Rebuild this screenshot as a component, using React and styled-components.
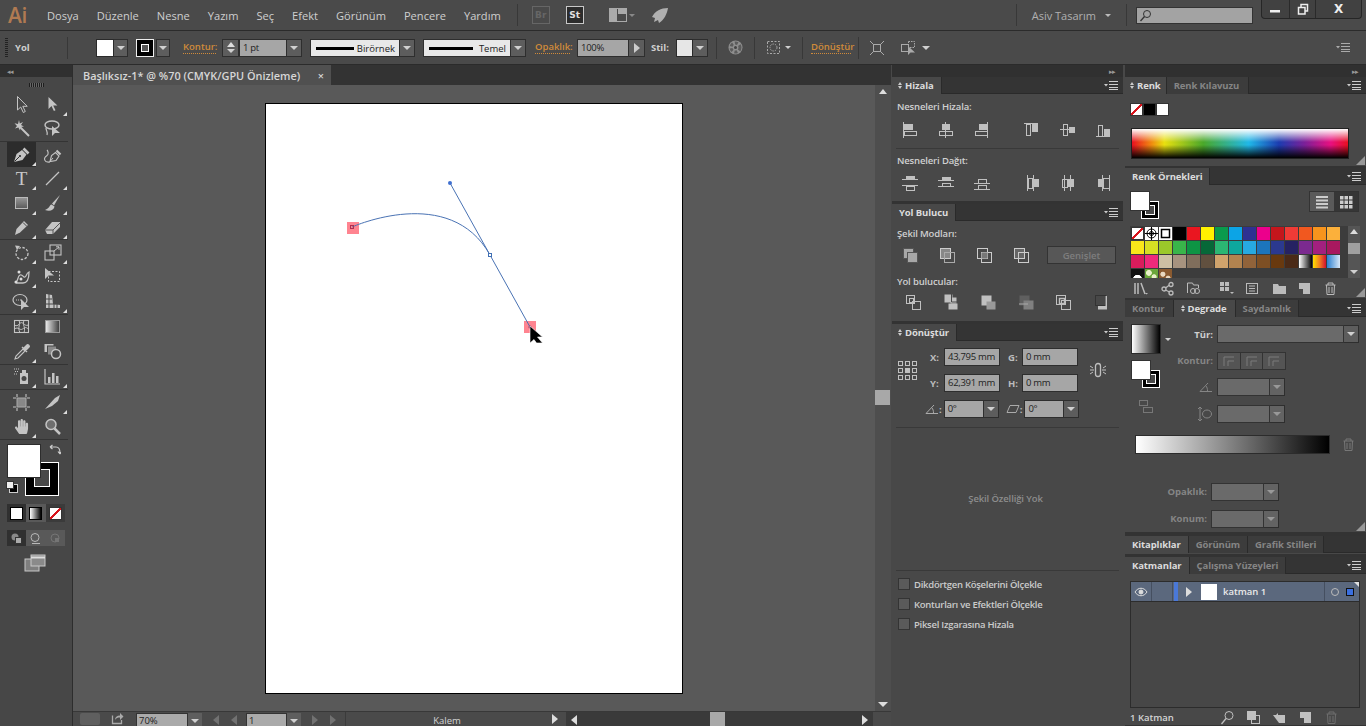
import React from 'react';
import styled, { createGlobalStyle } from 'styled-components';
import { FaHandPaper } from 'react-icons/fa';

const GlobalStyle = createGlobalStyle`
  html, body { margin: 0; padding: 0; background: #484848; overflow: hidden; }
  * { box-sizing: border-box; }
  body { font-family: "Open Sans", "Noto Sans", sans-serif; }
`;

const Shell = styled.div`
  width: 1366px;
  height: 726px;
  display: flex;
  flex-direction: column;
  overflow: hidden;
  background: #484848;
  color: #c8c8c8;
`;

/* top menu */
const MenuBar = styled.div`
  height: 31px;
  flex: none;
  display: flex;
  align-items: center;
  background: #4a4a4a;
  border-bottom: 1px solid #2b2b2b;
  position: relative;
`;
const Logo = styled.div`
  width: 47px;
  padding-left: 8px;
  font-family: "Open Sans", sans-serif;
  font-size: 21px;
  font-weight: 600;
  color: #b07a52;
  letter-spacing: -0.5px;
`;
const MenuItem = styled.span`
  font-size: 11.1px;
  color: #cfcfcf;
  margin-right: 18px;
`;
const VLine = styled.div`
  width: 1px;
  height: ${p => p.$h || 22}px;
  background: #383838;
  margin-left: ${p => p.$ml || 0}px;
  flex: none;
`;
const BridgeBox = styled.div`
  width: 18px;
  height: 18px;
  margin-left: ${p => p.$ml}px;
  border: 1px solid ${p => (p.$on ? '#c8c8c8' : '#666')};
  background: ${p => (p.$on ? '#2c2c2c' : 'transparent')};
  color: ${p => (p.$on ? '#e0e0e0' : '#666')};
  font: bold 9px "DejaVu Sans", sans-serif;
  display: flex;
  align-items: center;
  justify-content: center;
`;
const Slot = styled.div`
  margin-left: ${p => p.$ml || 0}px;
  margin-top: ${p => p.$mt || 0}px;
  width: ${p => p.$w || 'auto'}${p => (p.$w ? 'px' : '')};
  flex: none;
  display: flex;
  align-items: center;
  justify-content: center;
  color: #aaa;
`;
const Workspace = styled.span`
  margin-left: 15px;
  font-size: 11px;
  width: 66px;
  color: #b0b0b0;
  white-space: nowrap;
`;
const Caret = styled.i`
  display: block;
  flex: none;
  width: 0;
  height: 0;
  margin-left: ${p => p.$ml || 0}px;
  border-left: ${p => p.$s || 3}px solid transparent;
  border-right: ${p => p.$s || 3}px solid transparent;
  border-top: ${p => p.$s || 3}px solid ${p => p.$c || '#d0d0d0'};
`;
const SearchBox = styled.div`
  width: 117px;
  height: 17px;
  margin-left: 9px;
  background: #a3a3a3;
  border: 1px solid #333;
  display: flex;
  align-items: center;
  padding-left: 2px;
  color: #333;
`;
const WindowButtons = styled.div`
  position: absolute;
  top: 0;
  right: 4px;
  width: 101px;
  height: 19px;
  display: flex;
  background: #414141;
  border: 1px solid #262626;
  border-top: 0;
  border-radius: 0 0 4px 4px;
`;
const WinBtn = styled.div`
  width: ${p => p.$w}px;
  border-left: ${p => (p.$first ? 0 : '1px solid #2a2a2a')};
  display: flex;
  align-items: center;
  justify-content: center;
  color: #eee;
  font: bold 12px "DejaVu Sans", sans-serif;
`;

/* control bar */
const ControlBar = styled.div`
  height: 34px;
  flex: none;
  display: flex;
  align-items: center;
  background: #4a4a4a;
  border-bottom: 1px solid #2b2b2b;
  padding-right: 16px;
`;
const Grip = styled.div`
  width: 3px;
  height: 20px;
  margin-left: 5px;
  flex: none;
  background: repeating-linear-gradient(to bottom, #222 0 1px, transparent 1px 2px);
`;
const CtlLabel = styled.span`
  flex: none;
  width: ${p => p.$w}px;
  margin-left: ${p => p.$ml || 0}px;
  font-size: 9.5px;
  font-weight: 700;
  color: #cfcfcf;
  white-space: nowrap;
`;
const LinkLabel = styled(CtlLabel)`
  color: #d08a3a;
  font-weight: 600;
  border-bottom: 1px dotted #d08a3a;
  line-height: 12px;
`;
const Swatch = styled.div`
  flex: none;
  width: ${p => p.$w || 18}px;
  height: 18px;
  margin-left: ${p => p.$ml || 0}px;
  background: ${p => p.$bg || '#fff'};
  border: 1px solid #2a2a2a;
`;
const StrokeSwatch = styled(Swatch)`
  background: #000;
  border: 1px solid #eee;
  display: flex;
  align-items: center;
  justify-content: center;
  &::after {
    content: '';
    width: 6px;
    height: 6px;
    border: 1px solid #fff;
    background: #555;
  }
`;
const DropBtn = styled.div`
  flex: none;
  width: ${p => p.$w || 15}px;
  height: ${p => p.$h || 18}px;
  margin-left: ${p => p.$ml || 0}px;
  background: ${p => (p.$dim ? '#636363' : '#5d5d5d')};
  border: 1px solid #2e2e2e;
  border-left-width: ${p => (p.$joined ? 0 : 1)}px;
  display: flex;
  align-items: center;
  justify-content: center;
`;
const Spinner = styled.div`
  flex: none;
  width: 17px;
  height: 18px;
  margin-left: 6px;
  background: #5d5d5d;
  border: 1px solid #2e2e2e;
  display: flex;
  flex-direction: column;
  align-items: center;
  justify-content: space-around;
  padding: 2px 0;
`;
const UpTri = styled.i`
  display: block;
  width: 0;
  height: 0;
  border-left: 4px solid transparent;
  border-right: 4px solid transparent;
  border-bottom: 5px solid #ddd;
`;
const ValueBox = styled.div`
  flex: none;
  width: ${p => p.$w}px;
  height: ${p => p.$h || 18}px;
  margin-left: ${p => p.$ml || 0}px;
  background: #a6a6a6;
  border: 1px solid #2e2e2e;
  color: #1e1e1e;
  font-size: 9.5px;
  letter-spacing: -0.3px;
  line-height: ${p => (p.$h || 18) - 2}px;
  padding-left: 3px;
  white-space: nowrap;
  overflow: hidden;
`;
const StrokePick = styled.div`
  flex: none;
  width: ${p => p.$w}px;
  height: 18px;
  margin-left: ${p => p.$ml}px;
  background: #e8e8e8;
  border: 1px solid #2e2e2e;
  color: #222;
  font-size: 9.5px;
  padding: 1px 4px 0 5px;
  display: flex;
  align-items: center;
  justify-content: space-between;
  &::before {
    content: '';
    width: ${p => p.$line}px;
    height: 3px;
    background: #000;
  }
`;
const RightSlot = styled(Slot)`
  margin-left: auto;
`;

/* main area */
const Main = styled.div`
  flex: 1;
  display: flex;
  min-height: 0;
`;
const ToolColumn = styled.div`
  width: 73px;
  flex: none;
  background: #474747;
  border-right: 1px solid #2d2d2d;
  display: flex;
  flex-direction: column;
`;
const Strip = styled.div`
  height: 12px;
  flex: none;
  background: #303030;
  display: flex;
  align-items: center;
  justify-content: ${p => (p.$left ? 'flex-start' : 'flex-end')};
  padding: 0 8px 0 7px;
  color: #999;
  font-size: 7px;
  letter-spacing: -1px;
  line-height: 1;
`;
const ToolGrip = styled.div`
  height: 15px;
  flex: none;
  display: flex;
  justify-content: center;
  align-items: center;
  &::after {
    content: '';
    width: 15px;
    height: 4px;
    background: repeating-linear-gradient(to right, #1e1e1e 0 1px, #666 1px 2px);
  }
`;
const ToolGroup = styled.div`
  display: grid;
  grid-template-columns: 29px 29px;
  grid-auto-rows: 24.5px;
  column-gap: 2px;
  padding: 0 0 0 7px;
  margin: 0 4px 0 0;
  position: relative;
  border-bottom: 1px solid #343434;
  height: ${p => p.$rows * 24.5 + (p.$tight ? 0 : 1)}px;
`;
const ToolCell = styled.div`
  position: relative;
  display: flex;
  align-items: center;
  justify-content: center;
  color: #c4c4c4;
  background: ${p => (p.$on ? '#2c2c2c' : 'transparent')};
  &::after {
    content: '';
    display: ${p => (p.$more ? 'block' : 'none')};
    position: absolute;
    right: 0;
    bottom: 1px;
    width: 0;
    height: 0;
    border-left: 4px solid transparent;
    border-bottom: 4px solid #ddd;
  }
`;
const SerifT = styled.span`
  font: 19px "Liberation Serif", serif;
  color: #c8c8c8;
`;
const ColorBlock = styled.div`
  position: relative;
  height: 64px;
  flex: none;
`;
const BigFill = styled.div`
  position: absolute;
  left: 7px;
  top: 4px;
  width: 34px;
  height: 34px;
  background: #fff;
  border: 1px solid #2d2d2d;
  z-index: 2;
`;
const BigStroke = styled.div`
  position: absolute;
  left: 25px;
  top: 22px;
  width: 34px;
  height: 34px;
  background: #000;
  border: 1px solid #fff;
  display: flex;
  align-items: flex-end;
  justify-content: flex-end;
  padding: 8px;
  &::after {
    content: '';
    width: 100%;
    height: 100%;
    border: 1px solid #fff;
    background: #484848;
  }
`;
const OverIcon = styled.div`
  position: absolute;
  left: ${p => p.$x}px;
  top: ${p => p.$y}px;
  color: #ccc;
  display: flex;
`;
const ModeRow = styled.div`
  margin: ${p => p.$mt}px 0 0 7px;
  width: 58px;
  height: ${p => p.$h}px;
  flex: none;
  display: flex;
  background: #3b3b3b;
`;
const ModeCell = styled.div`
  flex: 1;
  display: flex;
  align-items: center;
  justify-content: center;
  background: ${p => (p.$on ? '#303030' : p.$lite ? '#595959' : 'transparent')};
  color: ${p => (p.$dim ? '#757575' : '#b8b8b8')};
`;
const ModeSwatch = styled.div`
  width: 13px;
  height: 13px;
  border: 1px solid #000;
  background: ${p => p.$bg};
`;
const ScreenBtn = styled.div`
  margin: 8px 0 0 24px;
  color: #bbb;
  display: flex;
`;

/* document */
const DocColumn = styled.div`
  width: 818px;
  flex: none;
  display: flex;
  flex-direction: column;
`;
const TabBar = styled.div`
  height: 20px;
  flex: none;
  background: #333;
`;
const DocTab = styled.div`
  width: 258px;
  height: 20px;
  background: #505050;
  display: flex;
  align-items: center;
  justify-content: space-between;
  padding: 0 7px 0 10px;
  font-size: 10.9px;
  font-weight: 600;
  color: #d6d6d6;
  white-space: nowrap;
`;
const DocBody = styled.div`
  flex: 1;
  display: flex;
  min-height: 0;
`;
const Canvas = styled.div`
  flex: 1;
  background: #595959;
  padding: 18px 0 0 192px;
`;
const Artboard = styled.div`
  position: relative;
  width: 418px;
  height: 591px;
  background: #fff;
  border: 1px solid #000;
`;
const PathOverlay = styled.svg`
  position: absolute;
  left: -1px;
  top: -1px;
`;
const VScroll = styled.div`
  width: 16px;
  flex: none;
  background: #4e4e4e;
  display: flex;
  flex-direction: column;
  align-items: center;
  justify-content: space-between;
  padding: 4px 0;
  position: relative;
`;
const ScrollThumb = styled.div`
  position: absolute;
  left: 0;
  top: 305px;
  width: 15px;
  height: 15px;
  background: #a8a8a8;
`;
const StatusBar = styled.div`
  height: 15px;
  flex: none;
  background: #4a4a4a;
  border-top: 1px solid #383838;
  display: flex;
  align-items: flex-start;
  font-size: 9.5px;
  overflow: hidden;
`;
const DimBox = styled.div`
  margin: 1px 0 0 7px;
  width: 20px;
  height: 12px;
  background: #5f5f5f;
  border-radius: 2px;
  flex: none;
`;
const StatusValue = styled.div`
  flex: none;
  width: ${p => p.$w}px;
  height: 16px;
  margin: 1px 0 0 ${p => p.$ml}px;
  background: #aaa;
  color: #222;
  padding-left: 2px;
  line-height: 14px;
  border: 1px solid #333;
`;
const StatusDrop = styled.div`
  flex: none;
  width: 14px;
  height: 16px;
  margin-top: 1px;
  background: #5e5e5e;
  display: flex;
  align-items: center;
  justify-content: center;
`;
const NavArrows = styled.div`
  flex: none;
  margin: 3px 0 0 ${p => p.$ml}px;
  width: ${p => p.$w}px;
  display: flex;
  justify-content: space-between;
  color: #717171;
`;
const StatusName = styled.div`
  flex: none;
  margin-left: 9px;
  width: 207px;
  padding-right: 4px;
  border-left: 1px solid #3b3b3b;
  text-align: center;
  color: #d4d4d4;
  line-height: 17px;
  height: 15px;
`;
const HScroll = styled.div`
  flex: none;
  margin-left: 8px;
  width: 307px;
  height: 15px;
  background: #3a3a3a;
  position: relative;
  display: flex;
  align-items: center;
  justify-content: space-between;
  padding: 0 5px;
`;
const HThumb = styled.div`
  position: absolute;
  left: 144px;
  top: 0;
  width: 15px;
  height: 15px;
  background: #a8a8a8;
`;
const SideTri = styled.i`
  display: block;
  flex: none;
  width: 0;
  height: 0;
  border-top: 5px solid transparent;
  border-bottom: 5px solid transparent;
  ${p => (p.$left ? `border-right: 6px solid ${p.$c || '#ddd'};` : `border-left: 6px solid ${p.$c || '#ddd'};`)}
  margin-left: ${p => p.$ml || 0}px;
  align-self: center;
`;
const NameArrow = styled(SideTri)`
  margin-top: 2px;
  align-self: flex-start;
`;

/* panels */
const PanelColumn = styled.div`
  flex: none;
  width: ${p => p.$w}px;
  margin-left: ${p => p.$ml}px;
  display: flex;
  flex-direction: column;
  background: #333;
`;
const Panel = styled.div`
  flex: none;
  height: ${p => p.$h}px;
  margin-top: ${p => p.$mt || 0}px;
  background: #484848;
  display: flex;
  flex-direction: column;
  position: relative;
`;
const FillRest = styled.div`
  flex: 1;
  background: #484848;
`;
const PanelHead = styled.div`
  height: 17px;
  flex: none;
  background: #343434;
  display: flex;
  align-items: stretch;
  border-bottom: 1px solid #2a2a2a;
  position: relative;
`;
const Tab = styled.div`
  display: flex;
  align-items: center;
  padding: 0 ${p => p.$pr || p.$px || 6}px 0 ${p => p.$px || 6}px;
  font-size: 9.5px;
  font-weight: 700;
  letter-spacing: -0.1px;
  white-space: nowrap;
  color: ${p => (p.$on ? '#dcdcdc' : '#858585')};
  background: ${p => (p.$on ? '#484848' : '#3c3c3c')};
  border-right: 1px solid #2a2a2a;
  height: 17px;
`;
const Updown = styled.span`
  font-size: 7px;
  margin-right: 3px;
  line-height: 1;
  display: flex;
  flex-direction: column;
  gap: 1px;
  &::before, &::after {
    content: '';
    width: 0;
    height: 0;
    border-left: 2.5px solid transparent;
    border-right: 2.5px solid transparent;
  }
  &::before { border-bottom: 3px solid #ccc; }
  &::after { border-top: 3px solid #ccc; }
`;
const PanelMenu = styled.div`
  margin-left: auto;
  align-self: center;
  margin-right: 5px;
  color: #ccc;
  display: flex;
`;
const Label = styled.div`
  height: 12px;
  line-height: 14px;
  margin-top: ${p => p.$mt || 0}px;
  padding-left: 5px;
  font-size: 9.5px;
  font-weight: 600;
  letter-spacing: -0.15px;
  color: #d0d0d0;
`;
const PanelRule = styled.div`
  height: 1px;
  flex: none;
  background: #393939;
  margin: ${p => p.$mt || 0}px 4px 0 4px;
`;
const IconRow = styled.div`
  display: flex;
  height: 20px;
  margin-top: ${p => p.$mt || 0}px;
  padding-left: ${p => p.$pl || 0}px;
  align-items: center;
`;
const IconCell = styled.div`
  flex: none;
  width: ${p => p.$w}px;
  margin-left: ${p => p.$ml || 0}px;
  display: flex;
  justify-content: center;
  color: #c0c0c0;
`;
const WideBtn = styled.div`
  margin-left: 7px;
  width: 69px;
  height: 18px;
  background: #575757;
  border: 1px solid #333;
  color: #7e7e7e;
  font-size: 9.5px;
  font-weight: 600;
  text-align: center;
  line-height: 18px;
`;
const TransformGrid = styled.div`
  display: grid;
  grid-template-columns: 33px 14px 56px 22px 56px 1fr;
  grid-template-rows: 18px 18px;
  row-gap: 8px;
  align-items: center;
  margin-top: 7px;
  padding-left: 5px;
`;
const RefPoint = styled.div`
  grid-row: 1 / 3;
  color: #c0c0c0;
  display: flex;
`;
const LinkSlot = styled.div`
  grid-row: 1 / 3;
  grid-column: 6;
  color: #c0c0c0;
  display: flex;
  justify-content: center;
  padding-right: 5px;
`;
const FieldLabel = styled.span`
  font-size: 9.5px;
  font-weight: 700;
  color: #bcbcbc;
  padding-left: ${p => p.$pl || 0}px;
`;
const AngleRow = styled.div`
  display: flex;
  align-items: center;
  margin-top: 8px;
  height: 18px;
`;
const EmptyNote = styled.div`
  height: 142px;
  display: flex;
  align-items: center;
  justify-content: center;
  font-size: 9.5px;
  font-weight: 600;
  letter-spacing: -0.12px;
  color: #8d8d8d;
  flex: none;
  padding: 0 4px 2px 0;
`;
const CheckList = styled.div`
  padding-top: 3px;
`;
const CheckRow = styled.div`
  height: 20px;
  display: flex;
  align-items: center;
  padding-left: 6px;
  font-size: 9.5px;
  font-weight: 600;
  letter-spacing: -0.27px;
  color: #cbcbcb;
`;
const CheckBox = styled.i`
  width: 12px;
  height: 12px;
  margin-right: 4px;
  background: #5a5a5a;
  border: 1px solid #343434;
  display: block;
`;
const ColorChips = styled.div`
  display: flex;
  margin: 9px 0 0 5px;
`;
const Chip = styled.div`
  width: 13px;
  height: 13px;
  background: ${p => p.$bg};
  border: 1px solid #333;
`;
const NoneFill = styled.div`
  width: ${p => p.$s || 13}px;
  height: ${p => p.$s || 13}px;
  flex: none;
  border: 1px solid #333;
  background: linear-gradient(to top left, #fff 0 43%, #d8141c 43% 57%, #fff 57% 100%);
`;
const Spectrum = styled.div`
  width: 218px;
  height: 31px;
  margin: 12px 0 0 6px;
  border: 1px solid #222;
  background:
    linear-gradient(to bottom, #fff 0%, rgba(255,255,255,0) 45%, rgba(0,0,0,0) 55%, #000 100%),
    linear-gradient(to right, #e81020 0%, #f08a10 9%, #e8e010 15%, #4aa82a 33%, #20b8e8 54%, #1c3cb0 68%, #7c2098 80%, #e81080 92%, #e81020 100%);
`;
const ResizeGrip = styled.div`
  position: absolute;
  right: 1px;
  bottom: 1px;
  width: 9px;
  height: 9px;
  background: radial-gradient(circle at 1px 1px, #999 0.8px, transparent 1px) 0 0 / 2px 2px;
  clip-path: polygon(100% 0, 100% 100%, 0 100%);
`;
const SwatchTop = styled.div`
  display: flex;
  justify-content: space-between;
  padding: 6px 7px 0 5px;
  height: 41px;
  flex: none;
`;
const MiniPair = styled.div`
  position: relative;
  width: 30px;
  height: 29px;
  flex: none;
  margin-top: ${p => p.$mt || 0}px;
`;
const MiniFill = styled.div`
  position: absolute;
  left: 0;
  top: 0;
  width: 20px;
  height: 20px;
  background: #fff;
  border: 1px solid #333;
  z-index: 2;
`;
const MiniStroke = styled.div`
  position: absolute;
  left: 11px;
  top: 10px;
  width: 18px;
  height: 18px;
  background: #000;
  border: 1px solid #fff;
  padding: 3px;
  display: flex;
  &::after {
    content: '';
    flex: 1;
    border: 1px solid #fff;
    background: #484848;
  }
`;
const ViewToggle = styled.div`
  display: flex;
  width: 50px;
  height: 21px;
  background: #363636;
  border: 1px solid #333;
`;
const ViewCell = styled.div`
  flex: 1;
  display: flex;
  align-items: center;
  justify-content: center;
  background: ${p => (p.$on ? '#5a5a5a' : 'transparent')};
  color: #ccc;
`;
const SwatchArea = styled.div`
  display: flex;
  margin-left: 5px;
  height: 52px;
  width: 230px;
  background: #3c3c3c;
  overflow: hidden;
`;
const SwatchGrid = styled.div`
  display: grid;
  grid-template-columns: repeat(15, 14px);
  grid-auto-rows: 14px;
  width: 217px;
  flex: none;
  padding: 1px 0 0 1px;
`;
const ColorCell = styled.div`
  background: ${p => p.$bg};
  border-right: 1px solid #3c3c3c;
  border-bottom: 1px solid #3c3c3c;
  display: flex;
  overflow: hidden;
`;
const SwatchScroll = styled.div`
  margin-left: 1px;
  width: 12px;
  background: #555;
  display: flex;
  flex-direction: column;
  align-items: center;
  justify-content: space-between;
  padding: 3px 0 4px;
  position: relative;
`;
const SmallThumb = styled.div`
  position: absolute;
  top: 17px;
  left: 0;
  width: 12px;
  height: 11px;
  background: #a0a0a0;
`;
const FootRow = styled.div`
  display: flex;
  align-items: center;
  height: 20px;
  padding-left: 7px;
  color: ${p => p.$c || '#bbb'};
`;
const FootIcon = styled.div`
  flex: none;
  width: 16px;
  margin-left: ${p => p.$ml || 0}px;
  display: flex;
  justify-content: center;
  color: ${p => p.$c || 'inherit'};
`;
const GradTop = styled.div`
  display: flex;
  padding: 7px 0 0 6px;
`;
const GradWidgets = styled.div`
  width: 45px;
  flex: none;
  display: flex;
  flex-direction: column;
`;
const GradPreviewRow = styled.div`
  display: flex;
  align-items: center;
  gap: 4px;
`;
const GradPreview = styled.div`
  width: 30px;
  height: 30px;
  border: 1px solid #2c2c2c;
  background: linear-gradient(to right, #fff, #000);
`;
const GradRows = styled.div`
  display: flex;
  flex-direction: column;
  gap: 8.5px;
  padding-top: 1px;
`;
const FormRow = styled.div`
  display: flex;
  align-items: center;
  height: 18px;
`;
const FormLabel = styled.span`
  width: ${p => p.$w || 37}px;
  flex: none;
  margin-left: ${p => p.$ml || 0}px;
  margin-right: 4px;
  font-size: 9.5px;
  font-weight: 700;
  text-align: right;
  white-space: nowrap;
  display: flex;
  justify-content: flex-end;
  color: ${p => (p.$dim ? '#858585' : '#cfcfcf')};
`;
const DimField = styled.div`
  flex: none;
  width: ${p => p.$w}px;
  height: 18px;
  background: #6a6a6a;
  border: 1px solid #333;
`;
const CornerBtns = styled.div`
  display: flex;
  width: 69px;
  height: 18px;
  border: 1px solid #333;
`;
const CornerBtn = styled.div`
  flex: 1;
  background: #545454;
  border-right: 1px solid #333;
  color: #7a7a7a;
  display: flex;
  align-items: center;
  justify-content: center;
  &:last-child { border-right: 0; }
`;
const GradBarRow = styled.div`
  display: flex;
  align-items: center;
  padding-left: 10px;
  margin-top: 12px;
  gap: 11px;
  color: #777;
`;
const GradBar = styled.div`
  width: 195px;
  height: 19px;
  border: 1px solid #2c2c2c;
  background: linear-gradient(to right, #fff, #000);
`;
const GradLower = styled.div`
  display: flex;
  flex-direction: column;
  gap: 9px;
  margin-top: 29px;
  padding-left: 45px;
`;
const LayerBox = styled.div`
  margin: 7px 6px 0 5px;
  height: 127px;
  background: #474747;
  border: 1px solid #2c2c2c;
  flex: none;
`;
const LayerRow = styled.div`
  position: relative;
  height: 20px;
  background: #5b687d;
  border-bottom: 1px solid #2c2c2c;
  display: flex;
  align-items: center;
  font-size: 9.5px;
  font-weight: 600;
  color: #eaeaea;
  &::after {
    content: '';
    position: absolute;
    right: 0;
    top: 0;
    width: 0;
    height: 0;
    border-top: 5px solid #e0e0e0;
    border-left: 5px solid transparent;
  }
`;
const LayerCell = styled.div`
  flex: none;
  height: 100%;
  width: ${p => p.$w}px;
  border-right: 1px solid #454f60;
  display: flex;
  align-items: center;
  justify-content: center;
  color: #ddd;
`;
const BlueBar = styled.i`
  display: block;
  width: 4px;
  height: 100%;
  margin: 0 5px 0 1px;
  flex: none;
  background: #4a78d8;
`;
const LayerThumb = styled.div`
  width: 16px;
  height: 16px;
  background: #fff;
  margin: 0 6px 0 9px;
  flex: none;
`;
const LayerName = styled.span`
  width: 101px;
  flex: none;
`;
const Target = styled.i`
  display: block;
  width: 8px;
  height: 8px;
  flex: none;
  border: 1px solid #bbb;
  border-radius: 50%;
  margin: 0 6px 0 6px;
`;
const Selected = styled.i`
  display: block;
  width: 8px;
  height: 8px;
  flex: none;
  margin-left: 1px;
  border: 1px solid #111;
  background: #3a6fe0;
`;
const LayerFoot = styled.div`
  display: flex;
  align-items: center;
  height: 19px;
  margin-top: 2px;
  padding-left: 5px;
  color: #c0c0c0;
`;
const LayerCount = styled.span`
  width: 79px;
  flex: none;
  font-size: 9.5px;
  font-weight: 600;
  color: #d4d4d4;
`;

/* svg icons */
const Svg = styled.svg`
  display: block;
  flex: none;
  fill: none;
  stroke: currentColor;
  stroke-width: 1;
`;
const Ico = ({ s = 18, w, h, children }) => (
  <Svg width={w || s} height={h || s} viewBox={`0 0 ${w || s} ${h || s}`}>{children}</Svg>
);
const F = { fill: 'currentColor', stroke: 'none' };

const toolIcons = {
  select: <path d="M5.5 1.5V15l3.2-3 2.6 5.5 2-1-2.5-5.2h4.4z" fill="#474747" />,
  direct: <path d="M5.5 2v12l3-3 2.4 5 1.6-.8-2.3-4.8h4.2z" {...F} />,
  wand: <><path d="M8 8l9 9" strokeWidth="2" /><path d="M7 1l.8 3.4L11 3 9 6l3 1.5-3.4.5L8 11.5 6.4 8.6 3 9.5 5 7 2.5 4.2 6 5z" {...F} /></>,
  lasso: <><ellipse cx="9" cy="6" rx="7" ry="4" strokeWidth="1.4" /><path d="M9 7v10l3-3h5z" {...F} /><path d="M3 9c0 3 2 3 1 7" strokeWidth="1.2" /></>,
  pen: <><path d="M2 17l2.5-8L10 5l4.5 4.5L10.5 15z" {...F} /><path d="M11.5 3.5l5 5" strokeWidth="2.6" /><path d="M2.5 16.5L7.5 11.5" stroke="#2c2c2c" /><circle cx="8" cy="11" r="1.1" fill="#2c2c2c" stroke="none" /></>,
  curve: <><path d="M7 16.5l1.500-6L12.500 7.500l3.500 3.500-3 4.500z" fill="#474747" strokeWidth="1.100" /><path d="M13.500 5.500l4 4" strokeWidth="2.200" /><path d="M7 16.500l3-3.500" /><path d="M7 17C1 18 0 13 4 10.500c2-1.500 1-4.500 0-5.500" strokeWidth="1.100" /></>,
  line: <path d="M3 16L16 3" strokeWidth="1.2" />,
  rect: <><defs><linearGradient id="rg" x2="0" y2="1"><stop offset="0" stopColor="#999" /><stop offset="1" stopColor="#5a5a5a" /></linearGradient></defs><rect x="3.500" y="3.500" width="12" height="11" fill="url(#rg)" stroke="#bbb" /></>,
  brush: <><path d="M17 1L9 9.500l2 2z" {...F} /><path d="M8.500 10.500c-2 .5-2 4-6.500 5.500 5 2 9 0 9.500-3.500z" {...F} /></>,
  pencil: <><path d="M3 17l1.500-6L12 3l4 4-8 7.500z" {...F} /><path d="M11 4.500l4 4" stroke="#474747" /></>,
  eraser: <><path d="M2 12L9 4h8v5l-7 7H4z" {...F} /><path d="M2 12h8v4M10 12l7-7" stroke="#555" /></>,
  rotate: <><circle cx="10" cy="10.500" r="6" strokeDasharray="2.500 1.500" strokeWidth="1.300" /><path d="M3 2.500l5 .5-3 4z" {...F} /></>,
  scale: <><rect x="2" y="8" width="9" height="9" strokeWidth="1.100" /><rect x="7" y="2" width="11" height="10" strokeWidth="1.100" /><path d="M11 8l5-4M13 3.800h3v3" /></>,
  warp: <><path d="M3 15c4 0 2-6 5-7 3-1 3 3 5 2s1-4 4-5c0 5-1 11-6 11H5z" strokeWidth="1.300" /><circle cx="4" cy="15" r="1.500" fill="#ddd" stroke="none" /><circle cx="9" cy="12" r="1.500" fill="#ddd" stroke="none" /><circle cx="7" cy="5" r="1.500" fill="#ddd" stroke="none" /></>,
  free: <><rect x="5.500" y="4.500" width="11" height="10" strokeDasharray="2 1.500" /><path d="M2 1v11l3.500-3.500H11z" {...F} /></>,
  builder: <><ellipse cx="8" cy="8" rx="7" ry="5.500" strokeWidth="1.200" /><path d="M4 8h6" strokeDasharray="1 1" /><path d="M9 7v11l3-3h5z" {...F} /></>,
  grid: <><path d="M3 2v14h14v-3l-7-1-1-9z" {...F} /><path d="M6 2v14M9 7h-6M3 12h12M11 12v4M14 12.500v3.500" stroke="#474747" /></>,
  mesh: <><rect x="2.500" y="3.500" width="14" height="12" strokeWidth="1.100" /><path d="M2.500 8c4 3 5-4 8-2s3 3 6 2M2.500 12c4-3 5 2 8 0s3-2 6 0M7 3.500c2 4-2 7 1 12M12 3.500c-2 4 2 7 0 12" /></>,
  gradient: <><defs><linearGradient id="gg"><stop offset="0" stopColor="#eee" /><stop offset="1" stopColor="#3a3a3a" /></linearGradient></defs><rect x="2.500" y="3.500" width="14" height="12" fill="url(#gg)" stroke="#999" /></>,
  dropper: <><path d="M3 17l1-3 7-7 2 2-7 7z" strokeWidth="1.100" /><path d="M10 5l5 5M12 6l3-3c1-1 3 1 2 2l-3 3z" fill="currentColor" strokeWidth="1.400" /></>,
  blend: <><rect x="1.500" y="2" width="9" height="8" {...F} /><rect x="4.500" y="4" width="9" height="9" fill="#888" stroke="#474747" /><circle cx="13" cy="12" r="4.500" fill="#474747" strokeWidth="1.500" /></>,
  spray: <><rect x="8" y="6" width="8" height="11" {...F} /><rect x="10" y="3" width="4" height="3" {...F} /><circle cx="12" cy="11.500" r="2.500" fill="#474747" stroke="none" /><path d="M2 2h5M3 4.500h4M2 7h4" strokeDasharray="1 1" /></>,
  chart: <><path d="M2 2v15h15" strokeWidth="1.200" /><path d="M5 10h2.500v6H5zM9 6h2.500v10H9zM13 9h2.500v7H13z" {...F} /></>,
  artboard: <><rect x="5" y="5" width="9" height="9" fill="#888" stroke="#aaa" /><path d="M5 1v3M14 1v3M5 15v3M14 15v3M1 5h3M1 14h3M15 5h3M15 14h3" strokeWidth="1.100" /></>,
  slice: <path d="M2 16L12 5l5-3-2 6-6 5z" {...F} />,
  zoom: <><circle cx="8" cy="7.500" r="5" fill="#6e6e6e" strokeWidth="1.500" /><path d="M11.500 11.500L17 17" strokeWidth="2.500" /></>,
};
const Tool = ({ name, on, more }) => (
  <ToolCell $on={on} $more={more}>
    <Ico s={19}>{toolIcons[name]}</Ico>
  </ToolCell>
);

const R = (x, y, w, h, solid) => (
  <rect x={x + 0.5} y={y + 0.5} width={w} height={h} {...(solid ? { fill: 'currentColor' } : {})} />
);
const alignIcons = [
  <><path d="M2.500 2v16" />{R(3, 4, 8, 5, 1)}{R(3, 11, 12, 4)}</>,
  <><path d="M8.500 2v16" />{R(5, 4, 7, 5, 1)}{R(2, 11, 13, 4)}</>,
  <><path d="M14.500 2v16" />{R(6, 4, 8, 5, 1)}{R(2, 11, 12, 4)}</>,
  <><path d="M1 3.500h14" />{R(3, 4, 4, 11)}{R(9, 4, 5, 7, 1)}</>,
  <><path d="M1 9.500h15" />{R(4, 4, 4, 11)}{R(10, 7, 5, 5, 1)}</>,
  <><path d="M1 16.500h14" />{R(3, 5, 4, 11)}{R(9, 9, 5, 7, 1)}</>,
];
const distIcons = [
  <><path d="M1 5.500h16M1 11.500h16" />{R(5, 2, 8, 3, 1)}{R(5, 12, 8, 4)}</>,
  <><path d="M1 6.500h16M1 12.500h16" />{R(5, 3, 8, 3, 1)}{R(5, 9, 8, 3)}</>,
  <><path d="M1 9.500h16M1 15.500h16" />{R(5, 5, 8, 4)}{R(5, 11, 8, 4)}</>,
  <><path d="M4.500 1v16M10.500 1v16" />{R(5, 4, 4, 10)}{R(11, 5, 4, 7, 1)}</>,
  <><path d="M5.500 1v16M11.500 1v16" />{R(3, 5, 5, 8)}{R(9, 5, 5, 7, 1)}</>,
  <><path d="M7.500 1v16M14.500 1v16" />{R(3, 5, 4, 7, 1)}{R(8, 4, 6, 10)}</>,
];
const S = { fill: '#a8a8a8', stroke: '#555' };
const modeIcons = [
  <><rect x="2.500" y="2.500" width="10" height="10" {...S} /><rect x="6.500" y="6.500" width="10" height="10" {...S} /></>,
  <><rect x="2.500" y="2.500" width="10" height="10" fill="#888" stroke="#ccc" /><rect x="6.500" y="6.500" width="10" height="10" fill="none" stroke="#aaa" /></>,
  <><rect x="2.500" y="2.500" width="10" height="10" fill="none" stroke="#ccc" /><rect x="6.500" y="6.500" width="10" height="10" fill="none" stroke="#ccc" /><rect x="6.500" y="6.500" width="6" height="6" fill="#777" stroke="none" /></>,
  <><rect x="2.500" y="2.500" width="10" height="10" fill="#666" stroke="#ccc" /><rect x="6.500" y="6.500" width="10" height="10" fill="none" stroke="#ccc" /></>,
];
const finderIcons = [
  <><rect x="2.500" y="2.500" width="8" height="8" /><rect x="5.500" y="5.500" width="4" height="4" /><rect x="8.500" y="8.500" width="8" height="8" /></>,
  <><rect x="2.500" y="1.500" width="8" height="8" {...F} /><rect x="8.500" y="4.500" width="6" height="6" {...F} /><rect x="6.500" y="10.500" width="9" height="6" {...F} /><path d="M9.500 1v8h7" stroke="#484848" /></>,
  <><rect x="2.500" y="2.500" width="10" height="10" {...F} /><rect x="7.500" y="8.500" width="9" height="8" fill="#999" stroke="none" /></>,
  <><rect x="2.500" y="2.500" width="10" height="10" fill="#5f5f5f" stroke="none" /><rect x="6.500" y="7.500" width="10" height="9" fill="#808080" stroke="none" /><path d="M2 11h9" stroke="#aaa" /></>,
  <><rect x="2.500" y="2.500" width="9" height="9" /><rect x="5.500" y="5.500" width="5" height="5" strokeWidth="1.400" /><rect x="7.500" y="7.500" width="9" height="9" /></>,
  <><rect x="3.500" y="2.500" width="10" height="10" stroke="#333" /><path d="M13.500 3v10H6v3.500h9V3z" {...F} /></>,
];
const TopCaret = () => <Caret $s={4} />;
const MenuLines = () => (
  <Ico w={14} h={9}>
    <path d="M0 3h4L2 5.500z" {...F} />
    <path d="M5 .5h9M5 3.500h9M5 6.500h9M5 8.500h9" />
  </Ico>
);
const SwatchColors = [
  ['#000'], ['#ea1620'], ['#fff200'], ['#0a9a4c'], ['#0ca4e6'], ['#2e3192'], ['#ec008c'], ['#c4161c'], ['#ef3b36'], ['#f1581f'], ['#f7941d'], ['#fbb03b'],
];
const row2 = ['#f9e61a', '#d7df23', '#9bc82a', '#39b54a', '#0d9444', '#066838', '#2bb673', '#0ea79d', '#27aae1', '#1c75bc', '#2b3990', '#262262', '#7b2a8f', '#a3207f', '#a8185f'];
const row3 = ['#da1c5c', '#ee2a7b', '#cdbfa3', '#a7937f', '#806e5c', '#61503f', '#d0a36c', '#b2834f', '#91633a', '#7d4f24', '#68390f', '#4a2a17', 'linear-gradient(to right,#fff,#000)', 'linear-gradient(to right,#ffe000,#f08020,#d01030)', 'linear-gradient(to right,#2a7fd0,#d8e8f8)'];
const row4 = [
  'radial-gradient(circle at 50% 80%,#fff 0 35%,#111 40%)',
  'radial-gradient(circle at 30% 30%,#e8f0c8 0 20%,transparent 25%),radial-gradient(circle at 70% 60%,#e8f0c8 0 18%,#6aa63a 24%)',
  'radial-gradient(circle at 30% 40%,#e8d8c0 0 18%,transparent 24%),radial-gradient(circle at 70% 70%,#e8d8c0 0 16%,#8a5a30 22%)',
];

export default function App() {
  return (
    <Shell>
      <GlobalStyle />
      <MenuBar>
        <Logo>Ai</Logo>
        {['Dosya', 'Düzenle', 'Nesne', 'Yazım', 'Seç', 'Efekt', 'Görünüm', 'Pencere', 'Yardım'].map(m => (
          <MenuItem key={m}>{m}</MenuItem>
        ))}
        <VLine $ml={-2} />
        <BridgeBox $ml={14}>Br</BridgeBox>
        <BridgeBox $ml={16} $on>St</BridgeBox>
        <Slot $ml={24} $w={28}>
          <Ico w={18} h={14}><rect x=".5" y=".5" width="17" height="13" /><path d="M1 1h7v12H1zM9 1h8v5H9z" {...F} /></Ico>
          <Caret $s={3} $ml={2} $c="#888" />
        </Slot>
        <Slot $ml={13} $w={20}>
          <Ico w={20} h={17}><path d="M19 1C12 1 6 4 3 10l3 1-1 4 4-2 1 3C15 13 18 7 19 1z" fill="#b0b0b0" stroke="none" /></Ico>
        </Slot>
        <VLine $ml={347} />
        <Workspace>Asiv Tasarım</Workspace>
        <Caret $s={3} $ml={7} $c="#bbb" />
        <VLine $ml={15} />
        <SearchBox>
          <Ico s={13}><circle cx="8" cy="5" r="3.500" /><path d="M5.500 7.500L1.500 12" strokeWidth="1.300" /></Ico>
        </SearchBox>
        <WindowButtons>
          <WinBtn $w={27} $first><Ico w={10} h={10}><path d="M0 6h10v2.500H0z" {...F} /></Ico></WinBtn>
          <WinBtn $w={27}><Ico s={12}><rect x="4" y="1.500" width="6.500" height="6.500" strokeWidth="1.500" /><rect x="1.500" y="4.500" width="6.500" height="6.500" fill="#414141" strokeWidth="1.500" /></Ico></WinBtn>
          <WinBtn $w={46}>X</WinBtn>
        </WindowButtons>
      </MenuBar>

      <ControlBar>
        <Grip />
        <CtlLabel $ml={7} $w={20}>Yol</CtlLabel>
        <VLine $ml={32} />
        <Swatch $ml={28} />
        <DropBtn $joined $w={14}><TopCaret /></DropBtn>
        <StrokeSwatch $ml={8} />
        <DropBtn $ml={2} $w={14}><TopCaret /></DropBtn>
        <LinkLabel $ml={13} $w={33}>Kontur:</LinkLabel>
        <Spinner><UpTri /><TopCaret /></Spinner>
        <ValueBox $w={48}>1 pt</ValueBox>
        <DropBtn $joined><TopCaret /></DropBtn>
        <StrokePick $ml={8} $w={90} $line={38}>Birörnek</StrokePick>
        <DropBtn $joined><TopCaret /></DropBtn>
        <StrokePick $ml={8} $w={88} $line={44}>Temel</StrokePick>
        <DropBtn $joined><TopCaret /></DropBtn>
        <LinkLabel $ml={9} $w={35}>Opaklık:</LinkLabel>
        <ValueBox $ml={7} $w={52}>100%</ValueBox>
        <DropBtn $joined $w={16}><SideTri $c="#ccc" /></DropBtn>
        <CtlLabel $ml={6} $w={17}>Stil:</CtlLabel>
        <Swatch $ml={8} $w={17} $bg="#e6e6e6" />
        <DropBtn $joined><TopCaret /></DropBtn>
        <VLine $ml={8} />
        <Slot $ml={11} $w={15}>
          <Ico s={15}><circle cx="7.500" cy="7.500" r="7" fill="#8e8e8e" stroke="none" /><circle cx="7.500" cy="7.500" r="4.500" stroke="#5c5c5c" strokeWidth="3" strokeDasharray="3 2" /><circle cx="7.500" cy="7.500" r="1.500" fill="#444" stroke="none" /></Ico>
        </Slot>
        <VLine $ml={11} />
        <Slot $ml={11} $w={15}>
          <Ico s={15}><rect x="1.500" y="1.500" width="12" height="12" strokeDasharray="2 1.500" /><circle cx="7.500" cy="7.500" r="3.500" strokeDasharray="1.500 1" /></Ico>
        </Slot>
        <Caret $s={3} $ml={4} />
        <VLine $ml={11} />
        <LinkLabel $ml={8} $w={40}>Dönüştür</LinkLabel>
        <VLine $ml={7} />
        <Slot $ml={10} $w={16}>
          <Ico s={16}><rect x="4.500" y="4.500" width="7" height="7" /><path d="M1 1l3 3M15 1l-3 3M1 15l3-3M15 15l-3-3" /></Ico>
        </Slot>
        <Slot $ml={15} $w={16}>
          <Ico s={16}><rect x="1.500" y="4.500" width="7" height="7" /><rect x="8.500" y="1.500" width="6" height="6" strokeDasharray="1.500 1" /><path d="M8 6v9l2.500-2.500H15z" {...F} /></Ico>
        </Slot>
        <Caret $s={4} $ml={6} />
        <RightSlot><MenuLines /></RightSlot>
      </ControlBar>

      <Main>
        <ToolColumn>
          <Strip $left>◂◂</Strip>
          <ToolGrip />
          <ToolGroup $rows={2}><Tool name="select" /><Tool name="direct" more /><Tool name="wand" /><Tool name="lasso" /></ToolGroup>
          <ToolGroup $rows={4} $tight>
            <Tool name="pen" on more /><Tool name="curve" />
            <ToolCell $more><SerifT>T</SerifT></ToolCell><Tool name="line" more />
            <Tool name="rect" more /><Tool name="brush" more />
            <Tool name="pencil" more /><Tool name="eraser" more />
          </ToolGroup>
          <ToolGroup $rows={3}>
            <Tool name="rotate" more /><Tool name="scale" more />
            <Tool name="warp" more /><Tool name="free" />
            <Tool name="builder" more /><Tool name="grid" more />
          </ToolGroup>
          <ToolGroup $rows={2}>
            <Tool name="mesh" /><Tool name="gradient" />
            <Tool name="dropper" more /><Tool name="blend" />
          </ToolGroup>
          <ToolGroup $rows={1}><Tool name="spray" more /><Tool name="chart" more /></ToolGroup>
          <ToolGroup $rows={2}>
            <Tool name="artboard" /><Tool name="slice" more />
            <ToolCell $more><FaHandPaper size={15} /></ToolCell><Tool name="zoom" />
          </ToolGroup>
          <ColorBlock>
            <BigFill />
            <BigStroke />
            <OverIcon $x={49} $y={4}>
              <Ico s={12}><path d="M1 3h6c3 0 4 2 4 6M1 3l2.500-2M1 3l2.500 2M11 10l-2-2.500M11 10l2-2.500" strokeWidth="1.200" /></Ico>
            </OverIcon>
            <OverIcon $x={6} $y={41}>
              <Ico s={12}><rect x="3.500" y="3.500" width="8" height="8" fill="#000" stroke="#ccc" /><rect x=".5" y=".5" width="7" height="7" fill="#eee" stroke="#333" /></Ico>
            </OverIcon>
          </ColorBlock>
          <ModeRow $mt={0} $h={18}>
            <ModeCell $on><ModeSwatch $bg="#fff" /></ModeCell>
            <ModeCell $lite><ModeSwatch $bg="linear-gradient(to right,#fff,#000)" /></ModeCell>
            <ModeCell><NoneFill /></ModeCell>
          </ModeRow>
          <ModeRow $mt={8} $h={16}>
            <ModeCell $on><Ico s={13}><circle cx="5" cy="5" r="3.500" fill="#888" stroke="none" /><rect x="5.500" y="5.500" width="6" height="6" fill="#aaa" stroke="#333" /></Ico></ModeCell>
            <ModeCell $lite><Ico s={13}><circle cx="6" cy="5.500" r="4" /><path d="M3 11.500h8" /></Ico></ModeCell>
            <ModeCell $lite $dim><Ico s={13}><circle cx="6" cy="6" r="4" /><path d="M6 6h4v4H6z" {...F} /></Ico></ModeCell>
          </ModeRow>
          <ScreenBtn>
            <Ico w={22} h={18}><rect x="1" y="5" width="14" height="12" fill="#7e7e7e" stroke="#c8c8c8" /><rect x="7" y="1" width="14" height="11" fill="#8a8a8a" stroke="#c8c8c8" /><path d="M7 3.500h14" stroke="#ddd" strokeWidth="2" /></Ico>
          </ScreenBtn>
        </ToolColumn>

        <DocColumn>
          <TabBar>
            <DocTab>Başlıksız-1* @ %70 (CMYK/GPU Önizleme)<span>×</span></DocTab>
          </TabBar>
          <DocBody>
            <Canvas>
              <Artboard>
                <PathOverlay width="420" height="592" viewBox="265 103 420 592">
                  <rect x="347" y="222" width="12" height="12" fill="#ff6e7d" opacity=".85" />
                  <rect x="524" y="321" width="12" height="12" fill="#ff6e7d" opacity=".85" />
                  <path d="M352 227C352 227 450 183 490 255" fill="none" stroke="#4a73b4" />
                  <path d="M450 183L530 327" fill="none" stroke="#4a73b4" />
                  <circle cx="450" cy="183" r="2" fill="#3f6fd0" />
                  <rect x="488.500" y="253.500" width="3" height="3" fill="#fff" stroke="#3f6fb4" />
                  <rect x="350.500" y="225.500" width="3" height="3" fill="none" stroke="#b03050" />
                  <circle cx="530" cy="327" r="1.500" fill="#8a3060" />
                  <path d="M530 326v17l4-3.500 2.500 3.500 0 0 6 0-5-6h5z" fill="#000" stroke="#fff" strokeWidth=".6" />
                </PathOverlay>
              </Artboard>
            </Canvas>
            <VScroll>
              <UpTri />
              <ScrollThumb />
              <Caret $s={5} $c="#ddd" />
            </VScroll>
          </DocBody>
          <StatusBar>
            <DimBox />
            <Slot $ml={9} $w={16}>
              <Ico s={13}><path d="M1.500 3.500v8h9V8" strokeWidth="1.300" /><path d="M4 8c0-3 2-4.500 5-4.500V1l3.500 3.500L9 8V5.500C7 5.500 5 6 4 8z" {...F} /></Ico>
            </Slot>
            <StatusValue $ml={11} $w={52}>70%</StatusValue>
            <StatusDrop><TopCaret /></StatusDrop>
            <NavArrows $ml={11} $w={24}>
              <SideTri $left $c="#717171" />
              <SideTri $left $c="#717171" />
            </NavArrows>
            <StatusValue $ml={9} $w={41}>1</StatusValue>
            <StatusDrop><TopCaret /></StatusDrop>
            <NavArrows $ml={11} $w={24}>
              <SideTri $c="#717171" />
              <SideTri $c="#717171" />
            </NavArrows>
            <StatusName>Kalem</StatusName>
            <NameArrow $c="#ddd" />
            <HScroll>
              <SideTri $left />
              <HThumb />
              <SideTri />
            </HScroll>
          </StatusBar>
        </DocColumn>

        <PanelColumn $w={231} $ml={1}>
          <Strip>▸▸</Strip>
          <Panel $h={124}>
            <PanelHead><Tab $on $pr={7}><Updown />Hizala</Tab><PanelMenu><MenuLines /></PanelMenu></PanelHead>
            <Label $mt={6}>Nesneleri Hizala:</Label>
            <IconRow $mt={7}>
              {alignIcons.map((ic, i) => (
                <IconCell key={i} $w={36} $ml={i === 3 ? 14 : 0}><Ico s={19}>{ic}</Ico></IconCell>
              ))}
            </IconRow>
            <PanelRule $mt={9} />
            <Label $mt={5}>Nesneleri Dağıt:</Label>
            <IconRow $mt={7}>
              {distIcons.map((ic, i) => (
                <IconCell key={i} $w={36} $ml={i === 3 ? 14 : 0}><Ico s={18}>{ic}</Ico></IconCell>
              ))}
            </IconRow>
          </Panel>
          <Panel $h={117} $mt={3}>
            <PanelHead><Tab $on $px={7}>Yol Bulucu</Tab><PanelMenu><MenuLines /></PanelMenu></PanelHead>
            <Label $mt={6}>Şekil Modları:</Label>
            <IconRow $mt={6}>
              {modeIcons.map((ic, i) => <IconCell key={i} $w={37}><Ico s={19}>{ic}</Ico></IconCell>)}
              <WideBtn>Genişlet</WideBtn>
            </IconRow>
            <Label $mt={10}>Yol bulucular:</Label>
            <IconRow $mt={5} $pl={3}>
              {finderIcons.map((ic, i) => <IconCell key={i} $w={37.5}><Ico s={19}>{ic}</Ico></IconCell>)}
            </IconRow>
          </Panel>
          <Panel $h={313} $mt={3}>
            <PanelHead><Tab $on $pr={7}><Updown />Dönüştür</Tab><PanelMenu><MenuLines /></PanelMenu></PanelHead>
            <TransformGrid>
              <RefPoint>
                <Ico w={20} h={20}>
                  {[1, 8, 15].map(x => [1, 8, 15].map(y => (
                    <rect key={`${x}${y}`} x={x + 0.5} y={y + 0.5} width="4" height="4" {...(x === 8 && y === 8 ? { fill: 'currentColor' } : {})} />
                  )))}
                </Ico>
              </RefPoint>
              <FieldLabel>X:</FieldLabel>
              <ValueBox $w={56}>43,795 mm</ValueBox>
              <FieldLabel $pl={8}>G:</FieldLabel>
              <ValueBox $w={56}>0 mm</ValueBox>
              <LinkSlot>
                <Ico w={18} h={18}><rect x="6.500" y="2.500" width="5" height="13" rx="2.500" strokeWidth="1.300" /><path d="M1 5l3 2M1 9h4M1 13l3-2M17 5l-3 2M17 9h-4M17 13l-3-2" /></Ico>
              </LinkSlot>
              <FieldLabel>Y:</FieldLabel>
              <ValueBox $w={56}>62,391 mm</ValueBox>
              <FieldLabel $pl={8}>H:</FieldLabel>
              <ValueBox $w={56}>0 mm</ValueBox>
            </TransformGrid>
            <AngleRow>
              <Slot $ml={33} $w={14}><Ico w={14} h={10}><path d="M1 9.500h12M1 9.500L9 1M7 4c1 1 1.500 3 1.500 5" /></Ico></Slot>
              <FieldLabel>:</FieldLabel>
              <ValueBox $ml={2} $w={40}>0°</ValueBox>
              <DropBtn $joined><TopCaret /></DropBtn>
              <Slot $ml={7} $w={14}><Ico w={14} h={10}><path d="M4 1.500h9L10 8.500H1z" /></Ico></Slot>
              <FieldLabel>:</FieldLabel>
              <ValueBox $ml={2} $w={40}>0°</ValueBox>
              <DropBtn $joined><TopCaret /></DropBtn>
            </AngleRow>
            <PanelRule $mt={9} />
            <EmptyNote>Şekil Özelliği Yok</EmptyNote>
            <PanelRule />
            <CheckList>
              <CheckRow><CheckBox />Dikdörtgen Köşelerini Ölçekle</CheckRow>
              <CheckRow><CheckBox />Konturları ve Efektleri Ölçekle</CheckRow>
              <CheckRow><CheckBox />Piksel Izgarasına Hizala</CheckRow>
            </CheckList>
          </Panel>
          <FillRest />
        </PanelColumn>

        <PanelColumn $w={241} $ml={2}>
          <Strip>▸▸</Strip>
          <Panel $h={89}>
            <PanelHead>
              <Tab $on $px={5}><Updown />Renk</Tab>
              <Tab $px={7} $pr={9}>Renk Kılavuzu</Tab>
              <PanelMenu><MenuLines /></PanelMenu>
            </PanelHead>
            <ColorChips>
              <NoneFill />
              <Chip $bg="#000" />
              <Chip $bg="#fff" />
            </ColorChips>
            <Spectrum />
            <ResizeGrip />
          </Panel>
          <Panel $h={130} $mt={2}>
            <PanelHead>
              <Tab $on $px={7}>Renk Örnekleri</Tab>
              <PanelMenu><MenuLines /></PanelMenu>
            </PanelHead>
            <SwatchTop>
              <MiniPair><MiniFill /><MiniStroke /></MiniPair>
              <ViewToggle>
                <ViewCell $on><Ico w={14} h={14}><path d="M1 2h12M1 5.500h12M1 9h12M1 12.500h12" strokeWidth="1.800" /></Ico></ViewCell>
                <ViewCell><Ico w={14} h={14}><path d="M1 1h3.500v3.500H1zM5.500 1H9v3.500H5.500zM10 1h3.500v3.500H10zM1 5.500h3.500V9H1zM5.500 5.500H9V9H5.500zM10 5.500h3.500V9H10zM1 10h3.500v3.500H1zM5.500 10H9v3.500H5.500zM10 10h3.500v3.500H10z" {...F} /></Ico></ViewCell>
              </ViewToggle>
            </SwatchTop>
            <SwatchArea>
              <SwatchGrid>
                <ColorCell $bg="#fff"><NoneFill $s={13} /></ColorCell>
                <ColorCell $bg="#fff"><Ico s={13}><circle cx="6.500" cy="6.500" r="4.500" stroke="#000" /><circle cx="6.500" cy="6.500" r="2" stroke="#000" /><path d="M6.500 0v13M0 6.500h13" stroke="#000" /></Ico></ColorCell>
                <ColorCell $bg="#fff"><Ico s={13}><rect x="2.500" y="2.500" width="8" height="8" stroke="#000" strokeWidth="1.500" /></Ico></ColorCell>
                {SwatchColors.map(([c]) => <ColorCell key={c} $bg={c} />)}
                {row2.map(c => <ColorCell key={c} $bg={c} />)}
                {row3.map(c => <ColorCell key={c} $bg={c} />)}
                {row4.map(c => <ColorCell key={c} $bg={c} />)}
              </SwatchGrid>
              <SwatchScroll>
                <UpTri />
                <SmallThumb />
                <TopCaret />
              </SwatchScroll>
            </SwatchArea>
            <FootRow>
              <FootIcon><Ico s={15}><path d="M2 2v11M5 2v11M8 2l4 11" strokeWidth="1.500" /><path d="M12 12h3l-1.500 1.500z" {...F} /></Ico></FootIcon>
              <FootIcon $ml={11}><Ico s={15}><circle cx="4" cy="8" r="2" strokeWidth="1.300" /><circle cx="11" cy="3.500" r="2" strokeWidth="1.300" /><circle cx="11" cy="12" r="2" strokeWidth="1.300" /><path d="M5.500 7l4-3M5.500 9l4 2" strokeWidth="1.300" /></Ico></FootIcon>
              <FootIcon $ml={11}><Ico s={16}><path d="M1.500 13V3h5l1 2h5v3" /><circle cx="7" cy="11" r="2.500" /><circle cx="11" cy="11" r="2.500" /></Ico></FootIcon>
              <FootIcon $ml={17}><Ico s={16}><path d="M1 2h4v4H1zM6 2h4v4H6zM1 7h4v4H1zM6 7h4v4H6z" {...F} /><path d="M11 12h4l-2 2z" {...F} /></Ico></FootIcon>
              <FootIcon $ml={9}><Ico s={15}><rect x="1.500" y="2.500" width="11" height="10" /><path d="M4 5h6M4 7.500h6M4 10h6" /></Ico></FootIcon>
              <FootIcon $ml={11}><Ico s={15}><path d="M1 3h5l1 2h7v8H1z" {...F} /></Ico></FootIcon>
              <FootIcon $ml={9}><Ico s={15}><path d="M2 2h11v11H6V8H2z" {...F} /></Ico></FootIcon>
              <FootIcon $ml={10}><Ico s={15}><path d="M2.500 4h10M5 4V2h5v2M3.500 4l.5 9.500h7l.5-9.500M6 6v6M9 6v6" /></Ico></FootIcon>
            </FootRow>
            <ResizeGrip />
          </Panel>
          <Panel $h={232} $mt={2}>
            <PanelHead>
              <Tab $px={7} $pr={8}>Kontur</Tab>
              <Tab $on $px={7} $pr={8}><Updown />Degrade</Tab>
              <Tab $px={7}>Saydamlık</Tab>
              <PanelMenu><MenuLines /></PanelMenu>
            </PanelHead>
            <GradTop>
              <GradWidgets>
                <GradPreviewRow><GradPreview /><Caret $s={3} /></GradPreviewRow>
                <MiniPair $mt={6}><MiniFill /><MiniStroke /></MiniPair>
                <Slot $ml={0} $mt={9} $w={30}>
                  <Ico s={16}><rect x="1.500" y="2.500" width="8" height="5" stroke="#777" /><rect x="5.500" y="9.500" width="9" height="5" stroke="#777" /></Ico>
                </Slot>
              </GradWidgets>
              <GradRows>
                <FormRow>
                  <FormLabel>Tür:</FormLabel>
                  <DimField $w={127} />
                  <DropBtn $joined><TopCaret /></DropBtn>
                </FormRow>
                <FormRow>
                  <FormLabel $dim>Kontur:</FormLabel>
                  <CornerBtns>
                    {[0, 1, 2].map(i => <CornerBtn key={i}><Ico s={14}><path d="M2 12V3h10M6 12V7h6" /></Ico></CornerBtn>)}
                  </CornerBtns>
                </FormRow>
                <FormRow>
                  <FormLabel $dim><Ico w={14} h={10}><path d="M1 9.500h12M1 9.500L9 1M7 4c1 1 1.500 3 1.500 5" /></Ico></FormLabel>
                  <DimField $w={53} />
                  <DropBtn $joined $dim><Caret $s={4} $c="#999" /></DropBtn>
                </FormRow>
                <FormRow>
                  <FormLabel $dim><Ico s={16}><path d="M3 1v14M1 3l2-2 2 2M1 13l2 2 2-2" /><ellipse cx="10" cy="8" rx="4.500" ry="4" /></Ico></FormLabel>
                  <DimField $w={53} />
                  <DropBtn $joined $dim><Caret $s={4} $c="#999" /></DropBtn>
                </FormRow>
              </GradRows>
            </GradTop>
            <GradBarRow>
              <GradBar />
              <Ico s={15}><path d="M2.500 4h10M5 4V2h5v2M3.500 4l.5 9.500h7l.5-9.500M6 6v6M9 6v6" /></Ico>
            </GradBarRow>
            <GradLower>
              <FormRow>
                <FormLabel $dim>Opaklık:</FormLabel>
                <DimField $w={53} />
                <DropBtn $joined $dim><Caret $s={4} $c="#999" /></DropBtn>
              </FormRow>
              <FormRow>
                <FormLabel $dim>Konum:</FormLabel>
                <DimField $w={53} />
                <DropBtn $joined $dim><Caret $s={4} $c="#999" /></DropBtn>
              </FormRow>
            </GradLower>
            <ResizeGrip />
          </Panel>
          <Panel $h={18} $mt={4}>
            <PanelHead>
              <Tab $on $px={7}>Kitaplıklar</Tab>
              <Tab $px={7}>Görünüm</Tab>
              <Tab $px={7}>Grafik Stilleri</Tab>
            </PanelHead>
          </Panel>
          <Panel $h={168} $mt={3}>
            <PanelHead>
              <Tab $on $px={7}>Katmanlar</Tab>
              <Tab $px={7}>Çalışma Yüzeyleri</Tab>
              <PanelMenu><MenuLines /></PanelMenu>
            </PanelHead>
            <LayerBox>
              <LayerRow>
                <LayerCell $w={21}><Ico w={14} h={10}><path d="M1 5c3-5 9-5 12 0-3 5-9 5-12 0z" /><circle cx="7" cy="5" r="2" fill="currentColor" /></Ico></LayerCell>
                <LayerCell $w={21} />
                <BlueBar />
                <SideTri $ml={3} />
                <LayerThumb />
                <LayerName>katman 1</LayerName>
                <LayerCell $w={1} />
                <Target />
                <Selected />
              </LayerRow>
            </LayerBox>
            <LayerFoot>
              <LayerCount>1 Katman</LayerCount>
              <FootIcon $ml={10}><Ico s={15}><circle cx="9" cy="5.500" r="4" /><path d="M6 8.500L1.500 14" strokeWidth="1.300" /></Ico></FootIcon>
              <FootIcon $ml={10}><Ico s={15}><rect x="1.500" y="1.500" width="8" height="8" fill="currentColor" /><rect x="5.500" y="5.500" width="8" height="8" /></Ico></FootIcon>
              <FootIcon $ml={10}><Ico s={15}><path d="M1 5h3l2-2v2h7v8H7z" {...F} /></Ico></FootIcon>
              <FootIcon $ml={10}><Ico s={15}><path d="M2 2h11v11H6V8H2z" {...F} /></Ico></FootIcon>
              <FootIcon $ml={10} $c="#6e6e6e"><Ico s={15}><path d="M2.500 4h10M5 4V2h5v2M3.500 4l.5 9.500h7l.5-9.500M6 6v6M9 6v6" /></Ico></FootIcon>
            </LayerFoot>
          </Panel>
        </PanelColumn>
      </Main>
    </Shell>
  );
}
